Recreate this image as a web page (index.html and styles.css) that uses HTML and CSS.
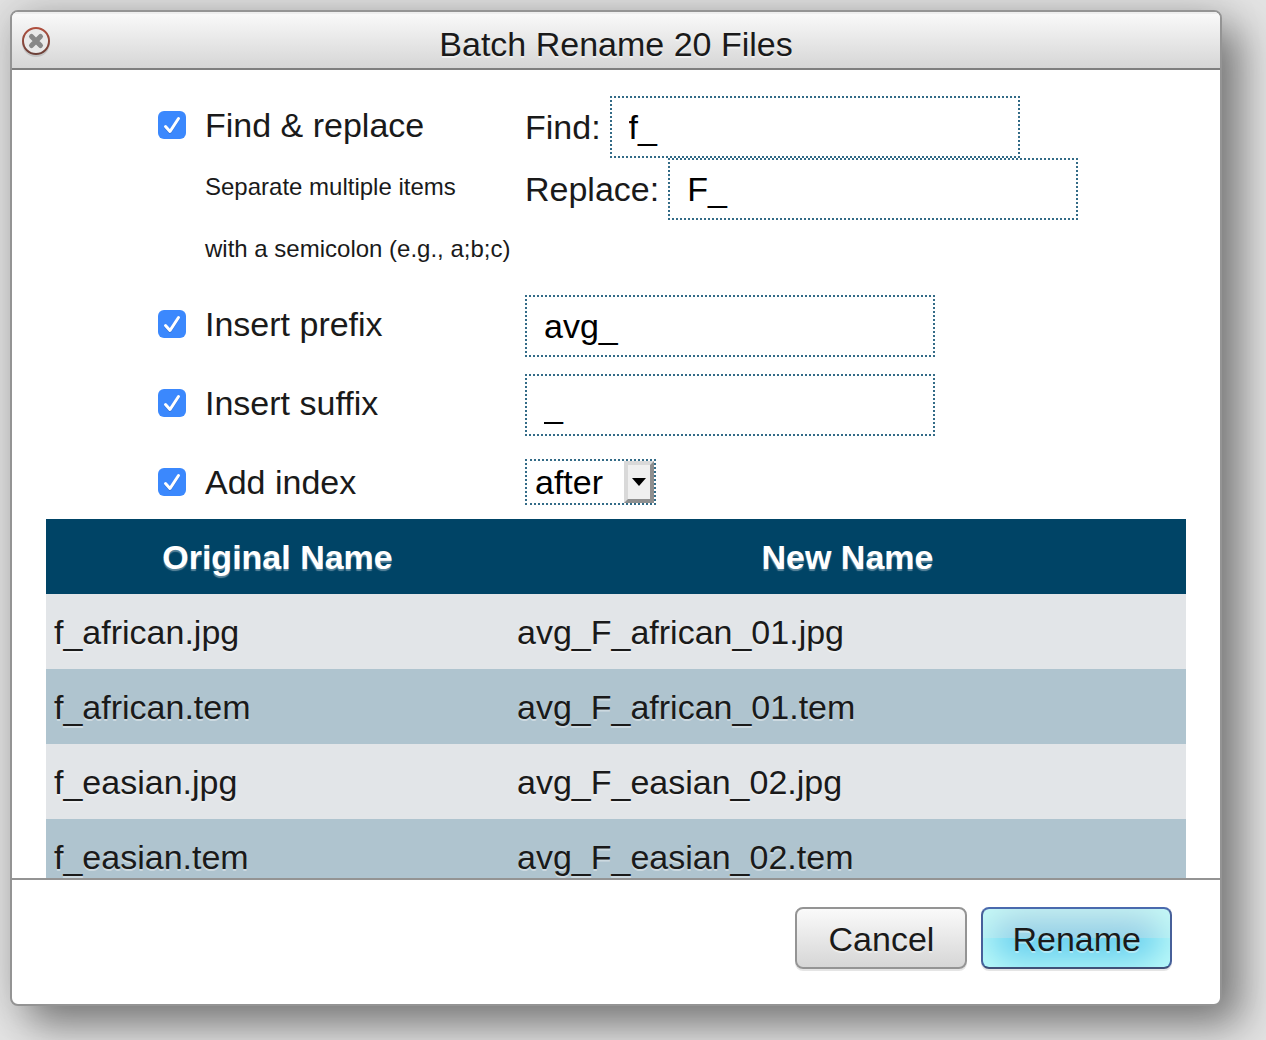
FILE: index.html
```html
<!DOCTYPE html>
<html lang="en">
<head>
<meta charset="utf-8">
<meta name="viewport" content="width=device-width, initial-scale=1">
<title>Batch Rename</title>
<link rel="stylesheet" href="styles.css">
</head>
<body>
<form class="dialog" role="dialog" aria-labelledby="title">
  <header class="titlebar">
    <button class="close" type="button" aria-label="Close">
      <svg viewBox="0 0 28 32" width="28" height="32" aria-hidden="true">
        <defs>
          <linearGradient id="ring" x1="0" y1="0" x2="0" y2="1">
            <stop offset="0" stop-color="#b0503f"/>
            <stop offset="1" stop-color="#6b4038"/>
          </linearGradient>
        </defs>
        <circle cx="14" cy="16" r="13" fill="none" stroke="#000" stroke-opacity=".12" stroke-width="2"/>
        <circle cx="14" cy="14" r="13" fill="#e9e9e9" stroke="url(#ring)" stroke-width="2"/>
        <path d="M9.500 9.500l9 9M18.500 9.500l-9 9" stroke="#888" stroke-width="5" stroke-linecap="round"/>
      </svg>
    </button>
    <h1 class="title" id="title">Batch Rename 20 Files</h1>
  </header>

  <main class="content">
    <section class="options">
      <div class="option">
        <input class="check" type="checkbox" id="replace-on" checked>
        <label class="name" for="replace-on">Find &amp; replace
          <small class="hint">Separate multiple items<br>with a semicolon (e.g., a;b;c)</small>
        </label>
        <div class="fields">
          <div class="field"><label for="find">Find:</label><input class="text" type="text" id="find" value="f_"></div>
          <div class="field"><label for="replace">Replace:</label><input class="text" type="text" id="replace" value="F_"></div>
        </div>
      </div>
      <div class="option">
        <input class="check" type="checkbox" id="prefix-on" checked>
        <label class="name" for="prefix-on">Insert prefix</label>
        <input class="text" type="text" value="avg_" aria-label="Prefix">
      </div>
      <div class="option">
        <input class="check" type="checkbox" id="suffix-on" checked>
        <label class="name" for="suffix-on">Insert suffix</label>
        <input class="text" type="text" value="_" aria-label="Suffix">
      </div>
      <div class="option">
        <input class="check" type="checkbox" id="index-on" checked>
        <label class="name" for="index-on">Add index</label>
        <div class="picker">
          <select class="select" aria-label="Index position">
            <option>before</option>
            <option selected>after</option>
          </select>
          <span class="arrow" aria-hidden="true"><svg viewBox="0 0 14 8" width="14" height="8"><path d="M0 0h14L7 8z"/></svg></span>
        </div>
      </div>
    </section>

    <table class="files">
      <colgroup><col class="col-old"><col></colgroup>
      <thead>
        <tr><th>Original Name</th><th>New Name</th></tr>
      </thead>
      <tbody>
        <tr><td>f_african.jpg</td><td>avg_F_african_01.jpg</td></tr>
        <tr><td>f_african.tem</td><td>avg_F_african_01.tem</td></tr>
        <tr><td>f_easian.jpg</td><td>avg_F_easian_02.jpg</td></tr>
        <tr><td>f_easian.tem</td><td>avg_F_easian_02.tem</td></tr>
      </tbody>
    </table>
  </main>

  <footer class="actions">
    <button class="button" type="button">Cancel</button>
    <button class="button primary" type="submit">Rename</button>
  </footer>
</form>
</body>
</html>
```
FILE: styles.css
```css
* {
  box-sizing: border-box;
}

body {
  margin: 0;
  height: 100vh;
  padding: 10px 44px 34px 10px;
  overflow: hidden;
  background: #e3e3e3;
  color: #1a1a1a;
  font: 34px/62px "Liberation Sans", Arial, sans-serif;
}

input,
select,
button {
  margin: 0;
  font: inherit;
}

.dialog {
  display: flex;
  flex-direction: column;
  height: 100%;
  overflow: hidden;
  border: 2px solid #949494;
  border-radius: 8px;
  background: #fff;
  box-shadow: 20px 20px 40px rgba(0, 0, 0, .42), 0 0 40px rgba(0, 0, 0, .15);
}

.titlebar {
  display: grid;
  grid-template-columns: 48px 1fr 48px;
  align-items: center;
  height: 58px;
  flex: none;
  border-bottom: 2px solid #7f7f7f;
  background: linear-gradient(#fafafa, #d6d6d6);
  box-shadow: inset 0 2px #eee;
}

.close {
  display: flex;
  margin-left: 10px;
  padding: 6px 0 0;
  border: 0;
  background: none;
}

.title {
  margin: 0;
  padding-top: 8px;
  font-size: 34px;
  font-weight: 400;
  line-height: 48px;
  text-align: center;
  text-shadow: 0 2px rgba(255, 255, 255, .5);
}

.content {
  flex: 1;
  min-height: 0;
  padding: 26px 34px 0;
  overflow-y: auto;
  scrollbar-width: none;
}

.options {
  display: flex;
  flex-direction: column;
  gap: 17px;
  padding: 0 0 8px 112px;
}

.option {
  display: grid;
  grid-template-columns: 47px 320px 1fr;
  align-items: start;
}

.check {
  appearance: none;
  width: 28px;
  height: 28px;
  margin-top: 15px;
  border-radius: 6px;
  background: #3b88fd url("data:image/svg+xml,%3Csvg xmlns='http://www.w3.org/2000/svg' viewBox='0 0 28 28'%3E%3Cpath d='M7.500 16.500l4.500 5 8.500-13.500' fill='none' stroke='%232a62b8' stroke-opacity='.5' stroke-width='3' stroke-linecap='round' stroke-linejoin='round'/%3E%3Cpath d='M7.500 15.500l4.500 5 8.500-13' fill='none' stroke='white' stroke-width='3' stroke-linecap='round' stroke-linejoin='round'/%3E%3C/svg%3E");
}

.name {
  line-height: 58px;
}

.hint {
  display: block;
  height: 124px;
  padding-top: 2px;
  font-size: 24px;
  line-height: 62px;
}

.field {
  display: flex;
  gap: 9px;
}

.text {
  width: 410px;
  height: 62px;
  padding: 0 17px;
  border: 2px dotted #336b87;
  background: #fff;
  color: #000;
}

.picker {
  display: flex;
  width: 131px;
  height: 46px;
  margin-top: 6px;
  border: 2px dotted #336b87;
}

.select {
  flex: 1;
  min-width: 0;
  padding: 0 0 0 8px;
  appearance: none;
  border: 0;
  background: none;
  color: #000;
  line-height: 42px;
}

.arrow {
  display: flex;
  align-items: center;
  justify-content: center;
  width: 30px;
  border: 4px solid;
  border-color: #d9d9d9 #8f8f8f #8f8f8f #d9d9d9;
  background: #efefef;
}

.files {
  width: 100%;
  table-layout: fixed;
  border-collapse: collapse;
  line-height: 73px;
}

.col-old {
  width: 463px;
}

.files th,
.files td {
  height: 75px;
  padding: 2px 8px 0;
  text-align: left;
  text-shadow: 0 2px rgba(255, 255, 255, .4);
}

.files th {
  background: #004466;
  color: #fff;
  text-align: center;
  text-shadow: 0 2px 1px rgba(255, 255, 255, .35);
}

.files tbody tr {
  background: #e2e5e8;
}

.files tbody tr:nth-child(even) {
  background: #afc4cf;
}

.actions {
  display: flex;
  justify-content: flex-end;
  gap: 14px;
  flex: none;
  padding: 27px 48px 35px;
  border-top: 2px solid #949494;
}

.button {
  min-width: 172px;
  height: 62px;
  padding: 2px 29px 0;
  border: 2px solid #949494;
  border-radius: 8px;
  background: linear-gradient(#fafafa, #d6d6d6);
  box-shadow: 0 2px rgba(0, 0, 0, .1);
  color: #1a1a1a;
  line-height: 56px;
  text-shadow: 0 2px rgba(255, 255, 255, .4);
}

.primary {
  border-color: #4a6aae #47609a #405078;
  background: linear-gradient(#a8c4dc, #84c4e4 50%, #50c4ec 50%, #50c4ec);
  box-shadow: inset 0 0 40px 8px #c8fffa, 0 2px rgba(0, 0, 0, .1);
}
```
